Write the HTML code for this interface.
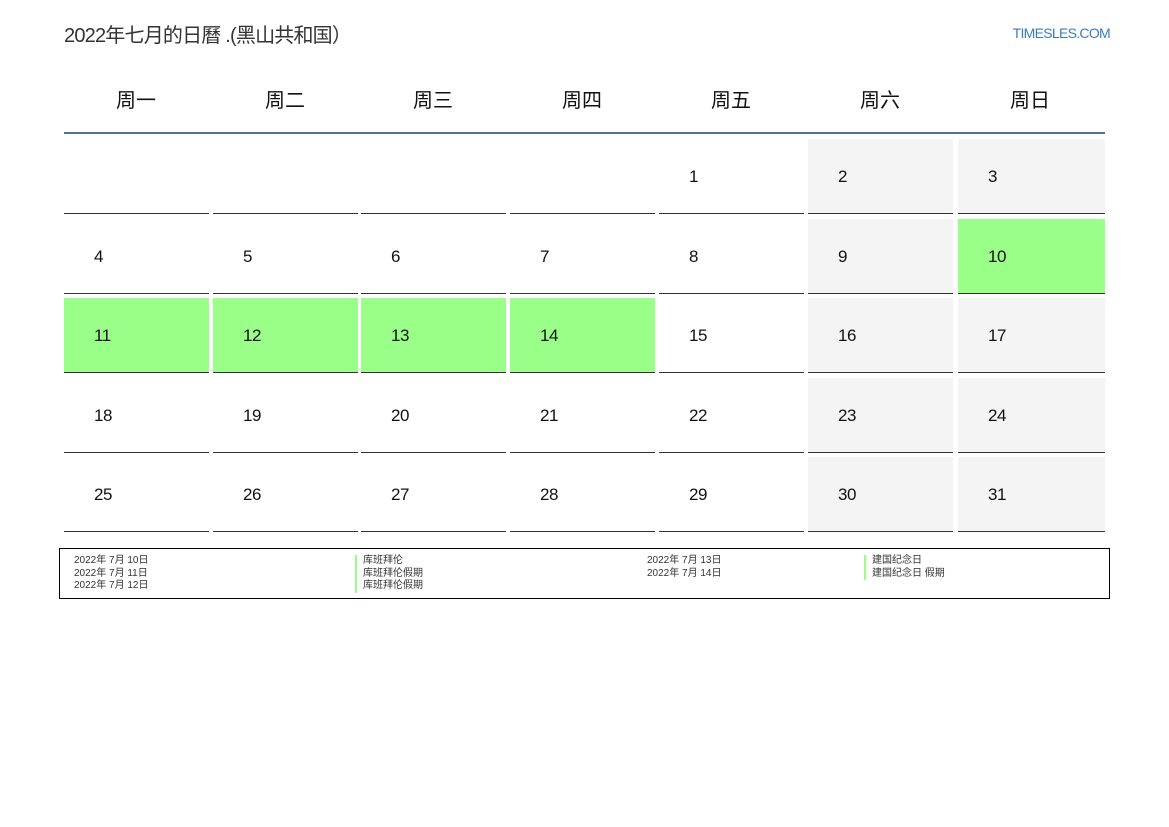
<html><head><style>
body{margin:0;width:1169px;height:827px;background:#fff;font-family:"Liberation Sans","Noto Sans CJK SC",sans-serif;position:relative;overflow:hidden}
.t{position:absolute;left:64px;top:19px;font-size:20px;color:#333;letter-spacing:-0.8px}
.logo{position:absolute;right:59px;top:25px;font-size:14px;color:#3a7cc0;letter-spacing:-0.7px}
.h{position:absolute;top:84px;width:144px;text-align:center;font-size:20px;color:#111}
.hl{position:absolute;left:64px;top:132px;width:1041px;height:2px;background:#4f6f96}
.c{position:absolute;width:145px;height:74px;border-bottom:1px solid #333;font-size:17px;color:#111;box-sizing:content-box}
.c span{position:absolute;left:30px;top:28px;letter-spacing:-0.5px}
.we{background:#f4f4f4}.ho{background:#99ff88}
.leg{position:absolute;left:59px;top:548px;width:1049px;height:49px;border:1px solid #000;font-size:10px;color:#333;line-height:12.5px}
.leg div{position:absolute;top:6px}
.b{border-left:2px solid #99ff88;padding-left:6px}
</style></head><body>
<div class="t">2022年七月的日曆 .(黑山共和国）</div>
<div class="logo">TIMESLES.COM</div>
<div class="h" style="left:64px">周一</div><div class="h" style="left:213px">周二</div><div class="h" style="left:361px">周三</div><div class="h" style="left:510px">周四</div><div class="h" style="left:659px">周五</div><div class="h" style="left:808px">周六</div><div class="h" style="left:958px">周日</div>
<div class="hl"></div>
<div id="g"></div>
<script>
var xs=[64,213,361,510,659,808,958],ys=[139,219,298,378,457],h='';
var hol={10:1,11:1,12:1,13:1,14:1};
for(var r=0;r<5;r++)for(var c=0;c<7;c++){var d=r*7+c-3;var cls='c';if(hol[d])cls+=' ho';else if(c>=5)cls+=' we';
h+='<div class="'+cls+'" style="left:'+xs[c]+'px;top:'+ys[r]+'px;'+(c==6?'width:147px':'')+'">'+(d>=1&&d<=31?'<span>'+d+'</span>':'')+'</div>';}
document.getElementById('g').innerHTML=h;
</script>
<div class="leg">
<div style="left:14px">2022年 7月 10日<br>2022年 7月 11日<br>2022年 7月 12日</div>
<div class="b" style="left:295px">库班拜伦<br>库班拜伦假期<br>库班拜伦假期</div>
<div style="left:587px">2022年 7月 13日<br>2022年 7月 14日</div>
<div class="b" style="left:804px">建国纪念日<br>建国纪念日 假期</div>
</div>
</body></html>
